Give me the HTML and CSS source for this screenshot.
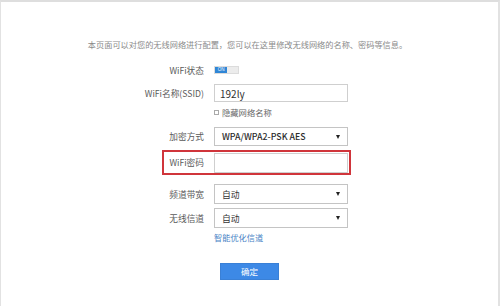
FILE: index.html
```html
<!DOCTYPE html>
<html lang="zh-CN">
<head>
<meta charset="utf-8">
<link rel="stylesheet" href="styles.css">
</head>
<body>
<div class="frame">
  <p class="intro">本页面可以对您的无线网络进行配置，您可以在这里修改无线网络的名称、密码等信息。</p>
  <div class="form">
    <div class="row r-status">
      <span class="label">WiFi状态</span>
      <span class="toggle"><span class="on">ON</span></span>
    </div>
    <div class="row r-ssid">
      <span class="label">WiFi名称(SSID)</span>
      <span class="input"><span class="val">192ly</span></span>
    </div>
    <div class="row r-check">
      <span class="label"></span>
      <span class="check"><span class="box"></span>隐藏网络名称</span>
    </div>
    <div class="row r-enc">
      <span class="label">加密方式</span>
      <span class="select"><span class="sval bold">WPA/WPA2-PSK AES</span><span class="arrow"></span></span>
    </div>
    <div class="row r-pass">
      <span class="label">WiFi密码</span>
      <span class="input"></span>
    </div>
    <div class="row r-bw">
      <span class="label">频道带宽</span>
      <span class="select"><span class="sval">自动</span><span class="arrow"></span></span>
    </div>
    <div class="row r-ch">
      <span class="label">无线信道</span>
      <span class="select"><span class="sval">自动</span><span class="arrow"></span></span>
    </div>
    <div class="row r-link">
      <span class="label"></span>
      <span class="link">智能优化信道</span>
    </div>
  </div>
  <div class="actions"><span class="btn">确定</span></div>
</div>
</body>
</html>
```
FILE: styles.css
```css
* { box-sizing: border-box; }
html, body { margin: 0; padding: 0; background: #fff; }
body { font-family: "Noto Sans CJK SC", "Noto Sans", sans-serif; }
.frame {
  width: 500px;
  height: 306px;
  border-top: 2px solid #dedede;
  border-left: 1px solid #e2e2e2;
  border-right: 2px solid #e2e2e2;
  padding-top: 36px;
}
.intro {
  margin: 0;
  text-align: center;
  font-size: 8.2px;
  line-height: 12px;
  color: #8a8a8a;
  padding-right: 4px;
}
.form {
  margin-top: 14px;
  margin-left: 140px;
  display: flex;
  flex-direction: column;
}
.row {
  display: flex;
  align-items: center;
  gap: 10px;
}
.label {
  width: 63px;
  text-align: right;
  font-size: 8.7px;
  color: #5a5a5a;
  white-space: nowrap;
  flex: none;
}
.r-status { height: 12px; }
.r-ssid { margin-top: 8px; height: 18px; }
.r-check { margin-top: 5px; height: 10px; }
.r-enc { margin-top: 10px; height: 19px; }
.r-pass {
  margin-top: 4px;
  height: 25px;
  margin-left: 21px;
  width: 189px;
  border: 2px solid #d0353b;
}
.r-pass .label { width: 40px; }
.r-bw { margin-top: 9px; height: 20px; }
.r-ch { margin-top: 4px; height: 20px; }
.r-link { margin-top: 3px; height: 12px; }

.toggle {
  width: 25px;
  height: 8px;
  background: #ececec;
  border: 1px solid #dcdcdc;
  display: flex;
}
.toggle .on {
  width: 12px;
  background: #2f86d6;
  color: #fff;
  font-size: 4.5px;
  line-height: 6px;
  text-align: center;
  font-family: "Liberation Sans", sans-serif;
}
.input, .select {
  width: 134px;
  height: 100%;
  border: 1px solid #cfcfcf;
  background: #fff;
  display: flex;
  align-items: center;
  flex: none;
}
.r-pass .input { height: 20px; }
.select { border-color: #c4c4c4; justify-content: space-between; padding: 0 7px 0 7px; }
.input .val {
  padding-left: 5px;
  font-size: 10px;
  color: #333;
}
.sval { font-size: 8.8px; color: #333; }
.sval.bold { font-weight: 500; color: #2c2c2c; }
.arrow {
  width: 0;
  height: 0;
  border-left: 2px solid transparent;
  border-right: 2px solid transparent;
  border-top: 4px solid #222;
}
.check {
  display: flex;
  align-items: center;
  font-size: 8.3px;
  color: #666;
  gap: 3px;
}
.check .box {
  width: 5px;
  height: 5px;
  border: 1px solid #aaa;
  background: #fff;
}
.link {
  font-size: 8.2px;
  color: #4a84c6;
}
.actions {
  margin-top: 20px;
  display: flex;
  justify-content: center;
}
.btn {
  width: 59px;
  height: 17px;
  background: #3d89e6;
  border: 1px solid #3a80d6;
  color: #fff;
  font-size: 8.5px;
  line-height: 15px;
  text-align: center;
}
```
